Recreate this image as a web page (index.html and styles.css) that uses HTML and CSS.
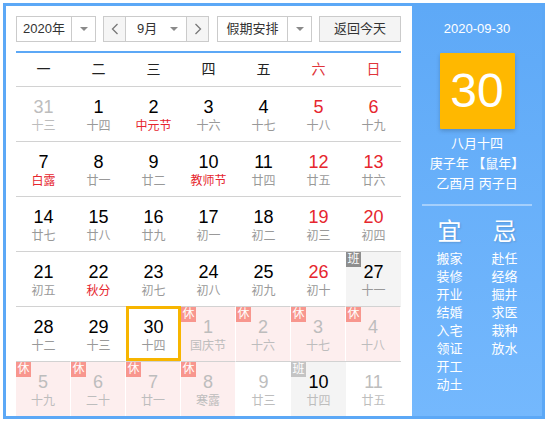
FILE: index.html
```html
<!DOCTYPE html>
<html lang="zh">
<head>
<meta charset="utf-8">
<link rel="stylesheet" href="styles.css">
</head>
<body>
<div class="cal">
  <div class="main">
    <div class="toolbar">
      <div class="box year">
        <span class="box-text">2020年</span>
        <span class="box-arrow"><i class="tri"></i></span>
      </div>
      <div class="box month">
        <span class="nav prev"><svg width="8" height="12" viewBox="0 0 8 12"><path d="M6.5 1 L1.5 6 L6.5 11" fill="none" stroke="#777" stroke-width="1.3"/></svg></span>
        <span class="month-mid"><span class="month-text">9月</span><i class="tri"></i></span>
        <span class="nav next"><svg width="8" height="12" viewBox="0 0 8 12"><path d="M1.5 1 L6.5 6 L1.5 11" fill="none" stroke="#777" stroke-width="1.3"/></svg></span>
      </div>
      <div class="box holiday">
        <span class="box-text">假期安排</span>
        <span class="box-arrow"><i class="tri"></i></span>
      </div>
      <div class="box today">返回今天</div>
    </div>
    <div class="blue-line"></div>
    <div class="weekdays">
      <span>一</span><span>二</span><span>三</span><span>四</span><span>五</span><span class="red">六</span><span class="red">日</span>
    </div>
    <div class="grid">
      <div class="cell other"><div class="num">31</div><div class="lu">十三</div></div>
      <div class="cell"><div class="num">1</div><div class="lu">十四</div></div>
      <div class="cell"><div class="num">2</div><div class="lu fest">中元节</div></div>
      <div class="cell"><div class="num">3</div><div class="lu">十六</div></div>
      <div class="cell"><div class="num">4</div><div class="lu">十七</div></div>
      <div class="cell weekend"><div class="num">5</div><div class="lu">十八</div></div>
      <div class="cell weekend"><div class="num">6</div><div class="lu">十九</div></div>

      <div class="cell"><div class="num">7</div><div class="lu fest">白露</div></div>
      <div class="cell"><div class="num">8</div><div class="lu">廿一</div></div>
      <div class="cell"><div class="num">9</div><div class="lu">廿二</div></div>
      <div class="cell"><div class="num">10</div><div class="lu fest">教师节</div></div>
      <div class="cell"><div class="num">11</div><div class="lu">廿四</div></div>
      <div class="cell weekend"><div class="num">12</div><div class="lu">廿五</div></div>
      <div class="cell weekend"><div class="num">13</div><div class="lu">廿六</div></div>

      <div class="cell"><div class="num">14</div><div class="lu">廿七</div></div>
      <div class="cell"><div class="num">15</div><div class="lu">廿八</div></div>
      <div class="cell"><div class="num">16</div><div class="lu">廿九</div></div>
      <div class="cell"><div class="num">17</div><div class="lu">初一</div></div>
      <div class="cell"><div class="num">18</div><div class="lu">初二</div></div>
      <div class="cell weekend"><div class="num">19</div><div class="lu">初三</div></div>
      <div class="cell weekend"><div class="num">20</div><div class="lu">初四</div></div>

      <div class="cell"><div class="num">21</div><div class="lu">初五</div></div>
      <div class="cell"><div class="num">22</div><div class="lu fest">秋分</div></div>
      <div class="cell"><div class="num">23</div><div class="lu">初七</div></div>
      <div class="cell"><div class="num">24</div><div class="lu">初八</div></div>
      <div class="cell"><div class="num">25</div><div class="lu">初九</div></div>
      <div class="cell weekend"><div class="num">26</div><div class="lu">初十</div></div>
      <div class="cell work"><span class="badge ban">班</span><div class="num">27</div><div class="lu">十一</div></div>

      <div class="cell"><div class="num">28</div><div class="lu">十二</div></div>
      <div class="cell"><div class="num">29</div><div class="lu">十三</div></div>
      <div class="cell selected"><div class="num">30</div><div class="lu">十四</div></div>
      <div class="cell rest"><span class="badge xiu">休</span><div class="num">1</div><div class="lu">国庆节</div></div>
      <div class="cell rest"><span class="badge xiu">休</span><div class="num">2</div><div class="lu">十六</div></div>
      <div class="cell rest"><span class="badge xiu">休</span><div class="num">3</div><div class="lu">十七</div></div>
      <div class="cell rest"><span class="badge xiu">休</span><div class="num">4</div><div class="lu">十八</div></div>

      <div class="cell rest"><span class="badge xiu">休</span><div class="num">5</div><div class="lu">十九</div></div>
      <div class="cell rest"><span class="badge xiu">休</span><div class="num">6</div><div class="lu">二十</div></div>
      <div class="cell rest"><span class="badge xiu">休</span><div class="num">7</div><div class="lu">廿一</div></div>
      <div class="cell rest"><span class="badge xiu">休</span><div class="num">8</div><div class="lu">寒露</div></div>
      <div class="cell other"><div class="num">9</div><div class="lu">廿三</div></div>
      <div class="cell other work"><span class="badge ban light">班</span><div class="num dark">10</div><div class="lu">廿四</div></div>
      <div class="cell other"><div class="num">11</div><div class="lu">廿五</div></div>
    </div>
  </div>
  <div class="side">
    <div class="side-date">2020-09-30</div>
    <div class="big-day">30</div>
    <div class="side-lunar">
      <div>八月十四</div>
      <div>庚子年 【鼠年】</div>
      <div>乙酉月 丙子日</div>
    </div>
    <div class="side-hr"></div>
    <div class="yiji">
      <div class="yiji-col">
        <div class="yiji-head">宜</div>
        <div class="yiji-item">搬家</div>
        <div class="yiji-item">装修</div>
        <div class="yiji-item">开业</div>
        <div class="yiji-item">结婚</div>
        <div class="yiji-item">入宅</div>
        <div class="yiji-item">领证</div>
        <div class="yiji-item">开工</div>
        <div class="yiji-item">动土</div>
      </div>
      <div class="yiji-col">
        <div class="yiji-head">忌</div>
        <div class="yiji-item">赴任</div>
        <div class="yiji-item">经络</div>
        <div class="yiji-item">掘井</div>
        <div class="yiji-item">求医</div>
        <div class="yiji-item">栽种</div>
        <div class="yiji-item">放水</div>
      </div>
    </div>
  </div>
</div>
</body>
</html>
```

FILE: styles.css
```css
body {
  margin: 0;
  background: #fff;
  font-family: "Liberation Sans", "Noto Sans CJK SC", sans-serif;
  color: #000;
}

.cal {
  margin: 3px 0 0 3px;
  width: 542px;
  height: 416px;
  box-sizing: border-box;
  border: 3px solid #5ca8f6;
  display: flex;
}

.main {
  width: 406px;
  box-sizing: border-box;
  padding: 10px 11px 0 10px;
  background: #fff;
}

/* toolbar */
.toolbar {
  display: flex;
  height: 26px;
}

.box {
  box-sizing: border-box;
  height: 26px;
  border: 1px solid #cbcbcb;
  display: flex;
  font-size: 13px;
  line-height: 24px;
  color: #333;
  background: #fff;
}

.year { width: 80px; }
.month { width: 106px; margin-left: 7px; }
.holiday { width: 95px; margin-left: 8px; }
.today {
  width: 82px;
  margin-left: 7px;
  justify-content: center;
  background: #f4f4f4;
}

.box-text {
  flex: 1;
  text-align: center;
}

.box-arrow {
  width: 23px;
  border-left: 1px solid #cbcbcb;
  display: flex;
  align-items: center;
  justify-content: center;
}

.tri {
  display: block;
  width: 0;
  height: 0;
  border-left: 4px solid transparent;
  border-right: 4px solid transparent;
  border-top: 4px solid #8a8a8a;
}

.nav {
  width: 21px;
  background: #f5f5f5;
  display: flex;
  align-items: center;
  justify-content: center;
}

.prev { border-right: 1px solid #cbcbcb; }
.next { border-left: 1px solid #cbcbcb; }

.month-mid {
  flex: 1;
  display: flex;
  align-items: center;
  padding-left: 11px;
}

.month-text { flex: 1; }
.month-mid .tri { margin-right: 8px; }

.blue-line {
  margin-top: 9px;
  height: 2px;
  background: #5ca8f6;
}

/* weekdays */
.weekdays {
  display: grid;
  grid-template-columns: repeat(7, 55px);
  height: 33px;
  line-height: 33px;
  text-align: center;
  font-size: 14px;
  color: #222;
}

.weekdays .red { color: #e0343a; }

/* grid */
.grid {
  display: grid;
  grid-template-columns: repeat(7, 55px);
  grid-auto-rows: 55px;
}

.cell {
  position: relative;
  box-sizing: border-box;
  border-top: 1px solid #d2d2d2;
  padding-top: 9px;
  text-align: center;
}

.num {
  font-size: 18px;
  line-height: 22px;
  color: #000;
}

.lu {
  font-size: 12px;
  line-height: 16px;
  color: #999;
}

.lu.fest { color: #e6262e; }
.weekend .num { color: #e6262e; }

.other .num { color: #bdbdbd; }
.other .lu { color: #bdbdbd; }
.other .num.dark { color: #000; }

.rest {
  background: #fdeeee;
  border-right: 1px solid #fff;
}
.rest .num { color: #bdbdbd; }
.rest .lu { color: #bdbdbd; }

.work { background: #f4f4f4; }

.badge {
  position: absolute;
  left: 0;
  top: 0;
  width: 15px;
  height: 15px;
  font-size: 12px;
  line-height: 15px;
  color: #fff;
  text-align: center;
}

.xiu { background: #f8968e; }
.ban { background: #8e8e8e; }
.ban.light { background: #c4c4c4; }

.selected::after {
  content: "";
  position: absolute;
  left: 0;
  right: 0;
  top: -1px;
  bottom: 0;
  border: 3px solid #f7b500;
}

/* side panel */
.side {
  flex: 1;
  background: linear-gradient(#5ea9f7, #74b8fd);
  color: #fff;
  text-align: center;
  padding-top: 13px;
}

.side-date {
  font-size: 13px;
  line-height: 20px;
}

.big-day {
  width: 75px;
  height: 76px;
  margin: 14px auto 0;
  background: #ffb800;
  font-size: 48px;
  line-height: 76px;
  box-shadow: 0 2px 4px rgba(0, 0, 0, 0.18);
  border-radius: 1px;
}

.side-lunar {
  margin-top: 5px;
  font-size: 13px;
  line-height: 20px;
}

.side-hr {
  height: 2px;
  margin: 10px 10px 0;
  background: rgba(255, 255, 255, 0.4);
}

.yiji {
  display: flex;
  margin: 0 10px;
}

.yiji-col {
  flex: 1;
}

.yiji-head {
  margin-top: 12px;
  margin-bottom: 4px;
  font-size: 24px;
  line-height: 28px;
  text-shadow: 1px 1px 2px rgba(0, 0, 0, 0.15);
}

.yiji-item {
  font-size: 13px;
  line-height: 18px;
}
```
